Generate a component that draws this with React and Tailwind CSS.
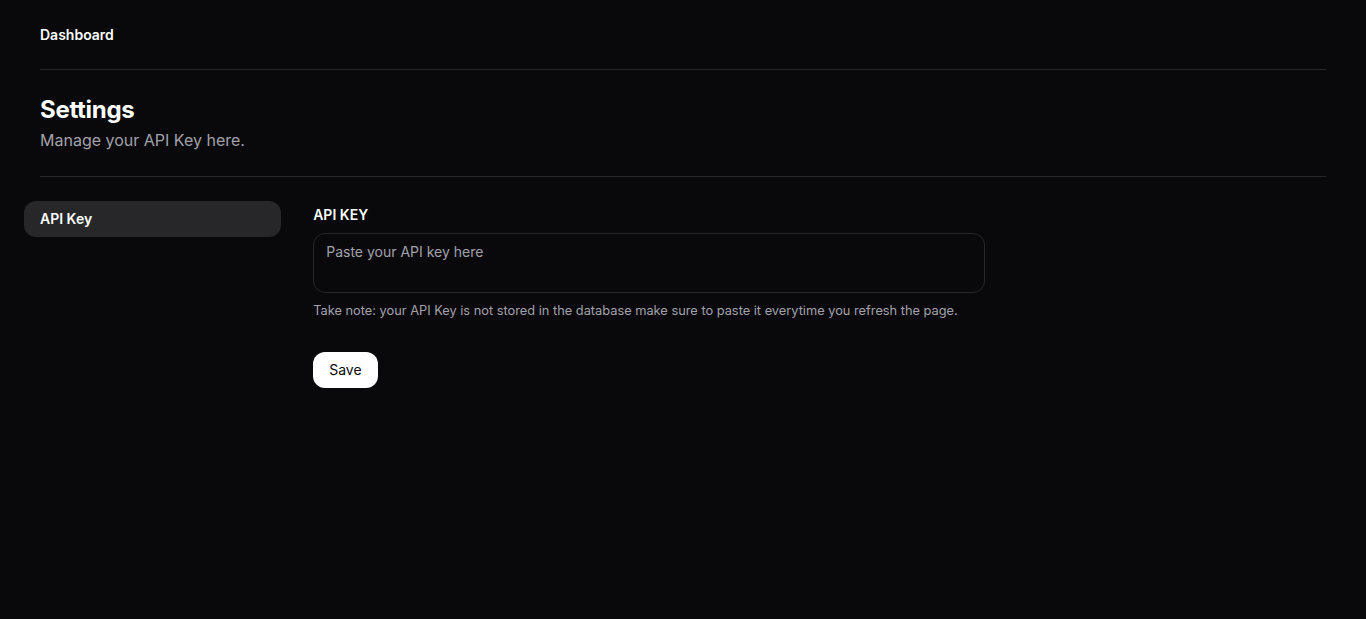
export default function App() {
  return (
    <div className="min-h-screen bg-[#09090b] text-white px-10" style={{ fontFamily: "Inter, 'Noto Sans', sans-serif" }}>
      {/* Top nav */}
      <div className="pt-[25px] pb-6 border-b border-[#27272a]">
        <span className="block text-sm font-semibold leading-5">Dashboard</span>
      </div>

      <div className="pt-6 pb-16 space-y-6">
        <div className="space-y-0.5">
          <h2 className="text-2xl font-bold tracking-[-0.3px]">Settings</h2>
          <p className="text-base text-[#a1a1aa]">Manage your API Key here.</p>
        </div>
        <div className="h-px bg-[#27272a]" />

        <div className="flex flex-row gap-x-12">
          <aside className="-mx-4 w-1/5">
            <nav className="flex flex-col">
              <button className="h-9 px-4 rounded-xl bg-[#27272a] text-left text-sm font-semibold text-white">
                API Key
              </button>
            </nav>
          </aside>

          <div className="flex-1 max-w-2xl pt-1">
            <form className="flex flex-col">
              <div className="flex flex-col gap-2">
                <label className="text-sm font-semibold leading-5">API KEY</label>
                <textarea
                  rows={1}
                  placeholder="Paste your API key here"
                  className="h-[60px] resize-none rounded-xl border border-[#27272a] bg-transparent px-3 py-2 text-sm text-white placeholder:text-[#a1a1aa] outline-none"
                />
                <p className="text-[12.8px] leading-5 text-[#a1a1aa]">
                  Take note: your API Key is not stored in the database make sure to paste it everytime you refresh the page.
                </p>
              </div>
              <div className="mt-[31px]">
                <button type="button" className="h-9 px-4 rounded-xl bg-white text-sm font-normal text-[#09090b]">
                  Save
                </button>
              </div>
            </form>
          </div>
        </div>
      </div>
    </div>
  );
}
